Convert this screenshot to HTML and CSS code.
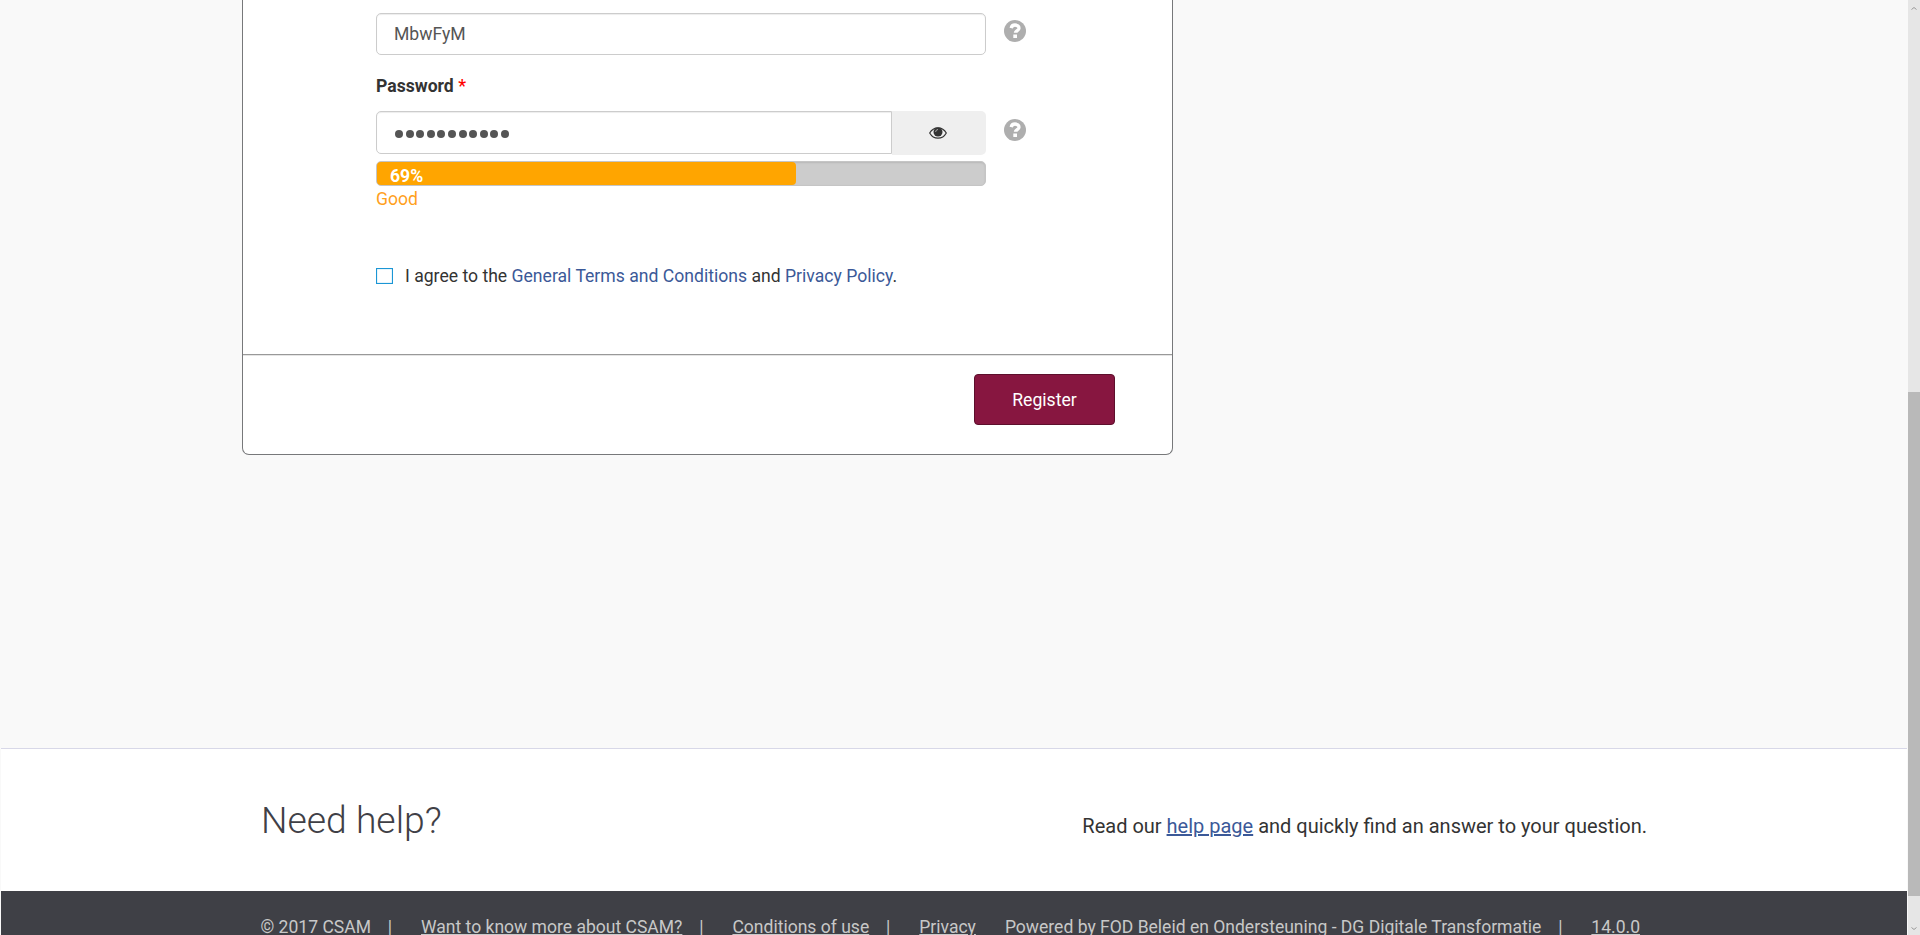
FILE: index.html
```html
<!DOCTYPE html>
<html lang="en">
<head>
<meta charset="utf-8">
<title>CSAM - Register</title>
<link rel="stylesheet" href="styles.css">
</head>
<body>
<div class="viewport">
  <div class="page">
    <main class="main">
      <section class="card">
        <div class="card-body">
          <div class="row">
            <div class="field">MbwFyM</div>
            <svg class="help" viewBox="0 0 22 22"><circle cx="11" cy="11" r="11"/><path d="M7.2 8.1C7.6 5.9 9 5 11 5c2.200 0 4 1.200 4 3.200 0 2.600-3.600 2.400-3.600 4.600" /><rect x="9.300" y="14.500" width="3.700" height="3.500"/></svg>
          </div>
          <div class="label">Password <span class="star">*</span></div>
          <div class="row row-password">
            <div class="field field-password"><span class="dots"><i></i><i></i><i></i><i></i><i></i><i></i><i></i><i></i><i></i><i></i><i></i></span></div>
            <div class="addon">
              <svg class="eye" viewBox="0 0 18 12"><path d="M.7 6C2.600 2.600 5.500.8 9 .8S15.400 2.600 17.300 6C15.400 9.400 12.500 11.200 9 11.200S2.600 9.400.7 6z"/><circle cx="9" cy="5" r="4.500"/><path class="glint" d="M6.700 4.900C6.700 3.500 7.600 2.600 9 2.600"/></svg>
            </div>
            <svg class="help" viewBox="0 0 22 22"><circle cx="11" cy="11" r="11"/><path d="M7.2 8.1C7.6 5.9 9 5 11 5c2.200 0 4 1.200 4 3.200 0 2.600-3.600 2.400-3.600 4.600" /><rect x="9.300" y="14.500" width="3.700" height="3.500"/></svg>
          </div>
          <div class="meter"><div class="meter-fill" style="width:68.85%">69%</div></div>
          <div class="rating">Good</div>
          <div class="agree"><span class="box"></span><span>I agree to the <a>General Terms and Conditions</a> and <a>Privacy Policy</a>.</span></div>
        </div>
        <div class="card-footer"><button class="register">Register</button></div>
      </section>
    </main>
    <section class="assist">
      <h2 class="assist-title">Need help?</h2>
      <p class="assist-text">Read our <a class="underlined">help page</a> and quickly find an answer to your question.</p>
    </section>
    <footer class="footer">
      <span class="copy">© 2017 CSAM</span><span class="bar">|</span><a>Want to know more about CSAM?</a><span class="bar">|</span><a>Conditions of use</a><span class="bar">|</span><a class="privacy">Privacy</a><span>Powered by FOD Beleid en Ondersteuning - DG Digitale Transformatie</span><span class="bar">|</span><a>14.0.0</a>
    </footer>
  </div>
  <div class="scrollbar">
    <svg class="arrow" viewBox="0 0 6 3"><path d="M.5 2.500L3 .5l2.500 2"/></svg>
    <div class="thumb"></div>
    <svg class="arrow arrow-down" viewBox="0 0 6 3"><path d="M.5.5L3 2.500 5.500.5"/></svg>
  </div>
</div>
</body>
</html>
```
FILE: styles.css
```css
* { box-sizing: border-box; }
body { margin: 0; background: #f9f9f9; color: #333; font: 17.6px/24px Roboto, "Liberation Sans", sans-serif; }
.viewport { display: flex; height: 935px; overflow: hidden; }
.page { display: flex; flex-direction: column; width: 1907px; padding-left: 1px; margin-right: 1px; height: 935px; overflow: hidden; }
.main { height: 748px; flex: none; padding-left: 241px; }
.card { width: 931px; height: 455px; background: #fff; border: 1px solid #77787a; border-top: 0; border-radius: 0 0 7px 7px; }
.card-body { height: 354px; padding: 13px 0 0 133px; }
.row { display: flex; }
.field { width: 610px; height: 42px; padding: 8px 17px; border: 1px solid #ccc; border-radius: 5px; box-shadow: inset 0 1px 1px rgba(0,0,0,.075); color: #555; }
.help { width: 22px; height: 22px; margin: 7px 0 0 18px; fill: #aeaeae; }
.help path { fill: none; stroke: #fff; stroke-width: 3.3; }
.help rect { fill: #fff; }
.label { margin-top: 19px; height: 24px; font-weight: 700; }
.star { color: #f00; font-weight: 500; }
.row-password { margin-top: 13px; }
.row-password .help { margin-top: 8px; }
.field-password { width: 516px; height: 43px; border-radius: 5px 0 0 5px; padding: 18px 18px; }
.dots { display: flex; gap: 2.600px; }
.dots i { width: 8px; height: 8px; border-radius: 50%; background: #555; }
.addon { width: 94px; height: 44px; background: #efefef; border-radius: 0 5px 5px 0; display: flex; align-items: center; justify-content: center; padding-right: 2px; }
.eye { width: 18px; height: 12px; fill: #333; }
.eye path { fill: none; stroke: #333; stroke-width: 1.200; }
.eye .glint { stroke: #bbb; stroke-width: .9; }
.meter { width: 610px; height: 25px; margin-top: 6px; border: 1px solid #c5c5c5; border-radius: 5px; background: #ccc; box-shadow: inset 0 1px 2px rgba(0,0,0,.1); }
.meter-fill { height: 23px; border-radius: 4px; background: #ffa500; color: #fff; font-weight: 700; line-height: 28px; padding-left: 13px; }
.rating { color: #ff9f1c; height: 24px; padding-top: 1px; }
.agree { display: flex; margin-top: 54px; }
.agree > span { white-space: nowrap; }
.box { width: 17px; height: 16px; margin: 4px 12px 0 0; border: 1px solid #1b96d5; box-shadow: inset 0 0 1px #1b96d5; }
a { color: #3b5998; }
.card-footer { height: 100px; border-top: 1px solid #999; box-shadow: inset 0 1px #e5e5e5; padding: 19px 57px 0 0; display: flex; justify-content: flex-end; align-items: flex-start; }
.register { width: 141px; height: 51px; border: 1px solid #5d0f2c; border-radius: 4px; background: #871640; color: #fff; font: inherit; padding: 0; }
.assist { height: 143px; flex: none; border-top: 1px solid #d8d8e8; background: #fff; padding: 0 260px; display: flex; justify-content: space-between; align-items: flex-start; }
.assist-title { margin: 48px 0 0; font-weight: 300; font-size: 37.3px; line-height: 46px; color: #3f4046; white-space: nowrap; }
.assist-text { margin: 64px 0 0; font-size: 20px; line-height: 26px; white-space: nowrap; }
.underlined { text-decoration: underline; }
.footer { height: 44px; background: #3f4046; color: #c8c8c8; padding: 24px 0 0 259.5px; display: flex; white-space: nowrap; font-size: 17.55px; }
.footer a { color: inherit; text-decoration: underline; }
.bar { margin: 0 28.9px 0 16.9px; }
.privacy { margin-right: 29px; }
.scrollbar { width: 12px; height: 935px; background: #e6e6e6; display: flex; flex-direction: column; align-items: center; }
.thumb { width: 12px; height: 504px; margin: 382px 0 31px; background: #b9b9b9; flex: none; }
.arrow { width: 6px; height: 3px; margin-top: 7px; flex: none; fill: none; stroke: #999; }
.arrow-down { margin-top: 0; }
```
